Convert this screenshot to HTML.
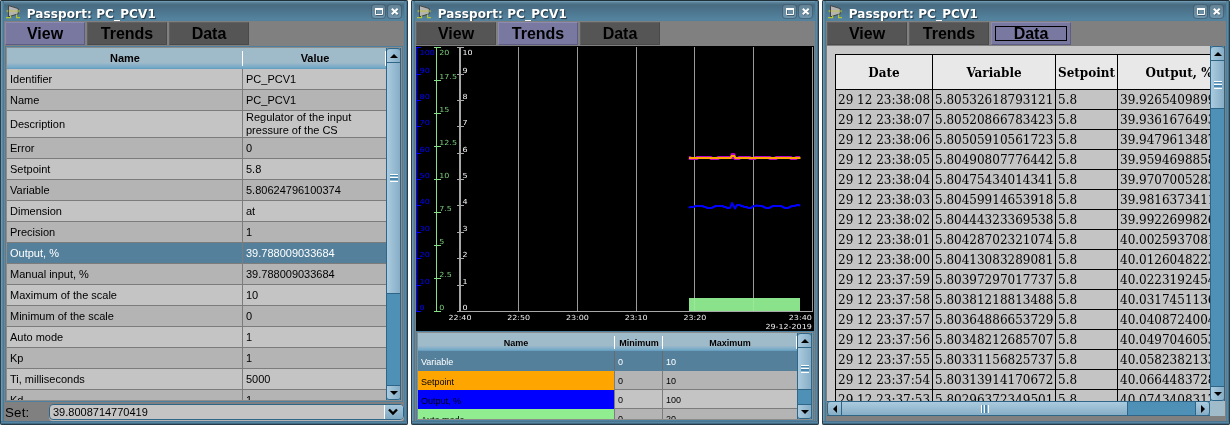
<!DOCTYPE html>
<html><head><meta charset="utf-8"><title>Passport: PC_PCV1</title>
<style>
html,body{margin:0;padding:0;background:#fff;}
body{width:1230px;height:425px;position:relative;overflow:hidden;font-family:"Liberation Sans",sans-serif;font-size:11px;color:#000;}
div{box-sizing:border-box;}
.win{will-change:transform;border-radius:2px;position:absolute;top:0;width:408px;height:425px;background:#808080;overflow:hidden;}
.win .tb{position:absolute;left:0;top:0;width:408px;height:21px;background:linear-gradient(#1f3038 0,#1f3038 1px,#7098b0 1px,#7098b0 2px,#5f879f 2px,#52788f 3.5px,#476b81 5px,#5484a0 20px,#4f7f9b 21px);}
.win .bl{position:absolute;left:0;top:1px;width:4px;height:424px;background:linear-gradient(90deg,#2a3e4a 0,#2a3e4a 1px,#6f98b0 1px,#6f98b0 2px,#5a88a2 2px,#5a88a2 3px,#4d7a93 3px);}
.win .br{position:absolute;left:404px;top:1px;width:4px;height:424px;background:linear-gradient(90deg,#4d829f 0,#4d829f 1px,#5a88a3 1px,#5a88a3 2px,#4a7088 2px,#4a7088 3px,#263c4a 3px);}
.win .bb{position:absolute;left:1px;top:421px;width:406px;height:4px;background:linear-gradient(#4a7590 0,#4a7590 1px,#5585a0 1px,#5585a0 2px,#416a82 2px,#416a82 3px,#283c48 3px);}
.win .ttl{position:absolute;left:26.7px;top:6px;letter-spacing:.12px;font-family:"DejaVu Sans",sans-serif;font-weight:bold;font-size:12px;color:#fff;white-space:nowrap;text-shadow:1px 1px 1px #223644;line-height:16px;}
.win .body{position:absolute;left:4px;top:21px;width:400px;height:400px;background:#808080;overflow:hidden;}
.abs{position:absolute;}
.tab{position:absolute;top:1px;width:80px;height:23px;border:1px solid #4a4a4a;border-top-color:#606060;border-left-color:#606060;background:#555;font-weight:bold;font-size:16px;text-align:center;line-height:21px;}
.tab.on{background:#7878a0;border-color:#8a8ab2 #5c5c84 #5c5c84 #8a8ab2;}
.wb{position:absolute;top:4px;width:15px;height:15px;border-radius:4px;background:rgba(255,255,255,.16);border:1px solid rgba(35,60,80,.5);}
.ico{position:absolute;left:4px;top:3px;width:18px;height:16px;}
.wbi{position:absolute;left:1px;top:1px;}
/* scrollbars */
.sbv{position:absolute;width:15px;border-left:1px solid #2f6586;border-right:1px solid #2f6586;background:#4f90b6;}
.sbb{position:absolute;left:0;width:13px;background:linear-gradient(90deg,#abcbdf,#86aec6);}
.sbu{top:0;height:15px;border-top:1px solid #2f6586;border-bottom:1px solid #2f6586;}
.arr{position:absolute;width:0;height:0;border-left:4px solid transparent;border-right:4px solid transparent;}
.arr.u{border-bottom:4px solid #000;}
.arr.d{border-top:4px solid #000;}
.grip{position:absolute;left:3px;width:8px;height:8px;background:linear-gradient(#fff 0,#fff 1px,#4a88b0 1px,#4a88b0 2.5px,transparent 2.5px,transparent 3.5px,#fff 3.5px,#fff 4.5px,#4a88b0 4.5px,#4a88b0 6px,transparent 6px,transparent 7px,#fff 7px,#fff 8px);}
.setl{position:absolute;left:1px;top:383px;font-size:13.33px;line-height:18px;letter-spacing:.2px;}
.combo{position:absolute;left:45px;top:383px;width:355px;height:16px;border:1px solid #2f6586;border-radius:4px;background:#c4c4c4;box-shadow:0 1px 0 rgba(255,255,255,.42);font-size:11px;line-height:14px;padding-left:3px;overflow:hidden;}
.combo .cb{position:absolute;right:0;top:0;width:19px;height:14px;border-left:1px solid #fff;background:linear-gradient(#a6c6da,#7fa9c2);}
.hsep{position:absolute;top:3px;width:1px;height:15px;background:#fff;}

.r2{position:absolute;left:0;width:379px;border-bottom:1px solid #7c7c7c;font-size:9px;}
.r2 .c{position:absolute;top:0;bottom:0;display:flex;align-items:center;padding-left:3px;padding-top:2px;white-space:nowrap;}
.r2.l{background:#c4c4c4}.r2.d{background:#b4b4b4}.r2.s{background:#54809c;color:#fff;border-bottom-color:#54809c}
.r2.s .c{border-left-color:#6a6a6a !important}
.ta{position:absolute;left:1px;top:25px;width:383px;height:355px;background:#c8c8c8;overflow:hidden;font-family:"DejaVu Serif","Liberation Serif",serif;font-size:12px;}
.dt{position:absolute;left:8px;top:8px;border-collapse:collapse;table-layout:fixed;width:406px;}
.dt th,.dt td{border:1px solid #000;padding:0 2px;white-space:nowrap;overflow:hidden;}
.dt th{background:#e8e8e8;height:32px;padding-top:2px;font-weight:bold;text-align:center;vertical-align:middle;}
.dt td{background:#c4c4c4;height:17px;line-height:17px;padding-top:2px;text-align:left;}
.sbh{position:absolute;height:15px;border-top:1px solid #2f6586;border-bottom:1px solid #2f6586;background:#4f90b6;}
.sbc{position:absolute;top:0;height:13px;background:linear-gradient(#abcbdf,#86aec6);}
.sbl{width:15px;border-left:1px solid #2f6586;border-right:1px solid #2f6586;}
.arh{position:absolute;width:0;height:0;border-top:4px solid transparent;border-bottom:4px solid transparent;}
.arh.l{border-right:4px solid #000;}
.arh.rr{border-left:4px solid #000;}
.griph{position:absolute;top:3px;width:8px;height:8px;background:linear-gradient(90deg,#fff 0,#fff 1px,#4a88b0 1px,#4a88b0 2.5px,transparent 2.5px,transparent 3.5px,#fff 3.5px,#fff 4.5px,#4a88b0 4.5px,#4a88b0 6px,transparent 6px,transparent 7px,#fff 7px,#fff 8px);}
.tab .fr{position:absolute;left:3px;top:3px;width:72px;height:15px;border:1px solid #000;}
/* table 1 */
.t1{position:absolute;left:1px;top:25px;width:398px;height:356px;border:1px solid #4b819e;background:#8c8c8c;overflow:hidden;}
.hd{position:absolute;background:linear-gradient(#9fbac9 0,#9fbac9 70%,#70a7c7 95%,#6097b8 100%);font-weight:bold;text-align:center;font-size:11px;}
.vp{position:absolute;left:1px;top:1px;width:379px;overflow:hidden;}
.r{position:absolute;left:0;width:379px;border-bottom:1px solid #7c7c7c;}
.r .a,.r .b{position:absolute;top:0;bottom:0;display:flex;align-items:center;padding-left:3px;white-space:nowrap;line-height:13px;}
.r .a{left:0;width:236px;border-right:1px solid #7c7c7c;}
.r .b{left:236px;right:0;}
.r.l{background:#c4c4c4}.r.d{background:#b4b4b4}.r.s{background:#54809c;color:#fff}
</style></head><body>
<div class="win" style="left:0px"><div class="tb"></div><div class="bl"></div><div class="br"></div><div class="bb"></div><svg class="ico" viewBox="0 0 18 16" width="18" height="16"><path d="M4.5 2.6 L14.3 5.6 L14.3 10.8 L4.5 13.8 Z" fill="#b4b4b4" stroke="#3a3a3a" stroke-width="0.9"/><path d="M2.6 8.2 H16.4" stroke="#c4c936" stroke-width="2.2" stroke-dasharray="1.6 0.7" opacity=".6"/><path d="M2 14.6 H6.6 V12.6 M16 14.6 H12.6 V11.4" fill="none" stroke="#b2c634" stroke-width="1.2"/></svg>
<div class="ttl">Passport: PC_PCV1</div>
<div class="wb" style="left:371px"><svg class="wbi" width="11" height="11" viewBox="0 0 11 11"><path d="M3 3.5 H10 V9.5 H3.5 Z" fill="none" stroke="#243a48" stroke-width="1" opacity=".55"/><path d="M2.5 2.5 H9.5 V8.5 H2.5 Z" fill="none" stroke="#fff" stroke-width="1"/><path d="M2 3 H10" stroke="#fff" stroke-width="2"/></svg></div><div class="wb" style="left:387px"><svg class="wbi" width="11" height="11" viewBox="0 0 11 11"><path d="M3.4 3.4 L9.2 9 M9.2 3.4 L3.4 9" stroke="#243a48" stroke-width="2" opacity=".5"/><path d="M2.8 2.7 L8.7 8.3 M8.7 2.7 L2.8 8.3" stroke="#fff" stroke-width="2"/></svg></div>
<div class="body"><div class="tab on" style="left:1px">View</div><div class="tab" style="left:83px">Trends</div><div class="tab" style="left:165px">Data</div>
<div class="t1"><div class="vp" style="height:352px"><div class="hd" style="left:0;top:0;width:379px;height:21px;line-height:20px"><span class="abs" style="left:0;width:236px">Name</span><span class="abs" style="left:237px;width:142px">Value</span></div><div class="r l" style="top:21px;height:21px"><div class="a">Identifier</div><div class="b">PC_PCV1</div></div><div class="r d" style="top:42px;height:21px"><div class="a">Name</div><div class="b">PC_PCV1</div></div><div class="r l" style="top:63px;height:27px"><div class="a">Description</div><div class="b">Regulator of the input<br>pressure of the CS</div></div><div class="r d" style="top:90px;height:21px"><div class="a">Error</div><div class="b">0</div></div><div class="r l" style="top:111px;height:21px"><div class="a">Setpoint</div><div class="b">5.8</div></div><div class="r d" style="top:132px;height:21px"><div class="a">Variable</div><div class="b">5.80624796100374</div></div><div class="r l" style="top:153px;height:21px"><div class="a">Dimension</div><div class="b">at</div></div><div class="r d" style="top:174px;height:21px"><div class="a">Precision</div><div class="b">1</div></div><div class="r s" style="top:195px;height:21px"><div class="a">Output, %</div><div class="b">39.788009033684</div></div><div class="r d" style="top:216px;height:21px"><div class="a">Manual input, %</div><div class="b">39.788009033684</div></div><div class="r l" style="top:237px;height:21px"><div class="a">Maximum of the scale</div><div class="b">10</div></div><div class="r d" style="top:258px;height:21px"><div class="a">Minimum of the scale</div><div class="b">0</div></div><div class="r l" style="top:279px;height:21px"><div class="a">Auto mode</div><div class="b">1</div></div><div class="r d" style="top:300px;height:21px"><div class="a">Kp</div><div class="b">1</div></div><div class="r l" style="top:321px;height:21px"><div class="a">Ti, milliseconds</div><div class="b">5000</div></div><div class="r d" style="top:342px;height:21px"><div class="a">Kd</div><div class="b">1</div></div><div class="hsep" style="left:235px"></div><div class="hsep" style="left:378px"></div></div><div class="sbv" style="left:380px;top:1px;height:352px"><div class="sbb sbu" style="border-radius:3px 3px 0 0"><div class="arr u" style="left:3px;top:5px"></div></div><div class="sbb" style="top:15px;height:231px;border-bottom:1px solid #2f6586"><div class="grip" style="top:111px"></div></div><div class="sbb sbu" style="top:337px;border-radius:0 0 3px 3px;border-bottom:1px solid #2f6586"><div class="arr d" style="left:3px;top:5px"></div></div></div></div><div class="setl">Set:</div><div class="combo">39.8008714770419<div class="cb"><svg class="wbi" style="left:2.5px;top:3px" width="10" height="8" viewBox="0 0 10 8"><path d="M1 1.5 L5 5.5 L9 1.5" fill="none" stroke="#000" stroke-width="2.4"/></svg></div></div></div></div>
<div class="win" style="left:411px"><div class="tb"></div><div class="bl"></div><div class="br"></div><div class="bb"></div><svg class="ico" viewBox="0 0 18 16" width="18" height="16"><path d="M4.5 2.6 L14.3 5.6 L14.3 10.8 L4.5 13.8 Z" fill="#b4b4b4" stroke="#3a3a3a" stroke-width="0.9"/><path d="M2.6 8.2 H16.4" stroke="#c4c936" stroke-width="2.2" stroke-dasharray="1.6 0.7" opacity=".6"/><path d="M2 14.6 H6.6 V12.6 M16 14.6 H12.6 V11.4" fill="none" stroke="#b2c634" stroke-width="1.2"/></svg>
<div class="ttl">Passport: PC_PCV1</div>
<div class="wb" style="left:371px"><svg class="wbi" width="11" height="11" viewBox="0 0 11 11"><path d="M3 3.5 H10 V9.5 H3.5 Z" fill="none" stroke="#243a48" stroke-width="1" opacity=".55"/><path d="M2.5 2.5 H9.5 V8.5 H2.5 Z" fill="none" stroke="#fff" stroke-width="1"/><path d="M2 3 H10" stroke="#fff" stroke-width="2"/></svg></div><div class="wb" style="left:387px"><svg class="wbi" width="11" height="11" viewBox="0 0 11 11"><path d="M3.4 3.4 L9.2 9 M9.2 3.4 L3.4 9" stroke="#243a48" stroke-width="2" opacity=".5"/><path d="M2.8 2.7 L8.7 8.3 M8.7 2.7 L2.8 8.3" stroke="#fff" stroke-width="2"/></svg></div>
<div class="body"><div class="tab" style="left:1px">View</div><div class="tab on" style="left:83px">Trends</div><div class="tab" style="left:165px">Data</div>
<svg class="abs" style="left:1px;top:25px" width="398" height="285" viewBox="0 0 398 285" font-family="DejaVu Sans, sans-serif" font-size="7"><rect width="398" height="285" fill="#000"/><rect x="102" y="1" width="1" height="264" fill="#9a9a9a"/><rect x="161" y="1" width="1" height="264" fill="#9a9a9a"/><rect x="220" y="1" width="1" height="264" fill="#9a9a9a"/><rect x="278" y="1" width="1" height="264" fill="#9a9a9a"/><rect x="337" y="1" width="1" height="264" fill="#9a9a9a"/><rect x="396" y="1" width="1" height="264" fill="#9a9a9a"/><rect x="273" y="252" width="111" height="13" fill="#8ae28a"/><rect x="278" y="252" width="1" height="13" fill="#9be89b"/><rect x="337" y="252" width="1" height="13" fill="#9be89b"/><rect x="43" y="265" width="354" height="1" fill="#a8a8a8"/><rect x="0" y="1" width="1.15" height="265" fill="#0000ff"/><rect x="0" y="1" width="5" height="1" fill="#0000ff"/><text transform="translate(3.6 9) scale(1.143 1)" fill="#0000ff">100</text><rect x="0" y="28" width="5" height="1" fill="#0000ff"/><text transform="translate(3.6 27) scale(1.143 1)" fill="#0000ff">90</text><rect x="0" y="54" width="5" height="1" fill="#0000ff"/><text transform="translate(3.6 53) scale(1.143 1)" fill="#0000ff">80</text><rect x="0" y="80" width="5" height="1" fill="#0000ff"/><text transform="translate(3.6 79) scale(1.143 1)" fill="#0000ff">70</text><rect x="0" y="107" width="5" height="1" fill="#0000ff"/><text transform="translate(3.6 106) scale(1.143 1)" fill="#0000ff">60</text><rect x="0" y="133" width="5" height="1" fill="#0000ff"/><text transform="translate(3.6 132) scale(1.143 1)" fill="#0000ff">50</text><rect x="0" y="159" width="5" height="1" fill="#0000ff"/><text transform="translate(3.6 158) scale(1.143 1)" fill="#0000ff">40</text><rect x="0" y="186" width="5" height="1" fill="#0000ff"/><text transform="translate(3.6 185) scale(1.143 1)" fill="#0000ff">30</text><rect x="0" y="212" width="5" height="1" fill="#0000ff"/><text transform="translate(3.6 211) scale(1.143 1)" fill="#0000ff">20</text><rect x="0" y="239" width="5" height="1" fill="#0000ff"/><text transform="translate(3.6 238) scale(1.143 1)" fill="#0000ff">10</text><rect x="0" y="265" width="5" height="1" fill="#0000ff"/><text transform="translate(3.6 264) scale(1.143 1)" fill="#0000ff">0</text><rect x="20" y="1" width="1" height="265" fill="#86df86"/><rect x="18" y="1" width="7" height="1" fill="#86df86"/><text transform="translate(23.2 9) scale(1.143 1)" fill="#7acb7a">20</text><rect x="18" y="34" width="7" height="1" fill="#86df86"/><text transform="translate(23.2 33) scale(1.143 1)" fill="#7acb7a">17.5</text><rect x="18" y="67" width="7" height="1" fill="#86df86"/><text transform="translate(23.2 66) scale(1.143 1)" fill="#7acb7a">15</text><rect x="18" y="100" width="7" height="1" fill="#86df86"/><text transform="translate(23.2 99) scale(1.143 1)" fill="#7acb7a">12.5</text><rect x="18" y="133" width="7" height="1" fill="#86df86"/><text transform="translate(23.2 132) scale(1.143 1)" fill="#7acb7a">10</text><rect x="18" y="166" width="7" height="1" fill="#86df86"/><text transform="translate(23.2 165) scale(1.143 1)" fill="#7acb7a">7.5</text><rect x="18" y="199" width="7" height="1" fill="#86df86"/><text transform="translate(23.2 198) scale(1.143 1)" fill="#7acb7a">5</text><rect x="18" y="232" width="7" height="1" fill="#86df86"/><text transform="translate(23.2 231) scale(1.143 1)" fill="#7acb7a">2.5</text><rect x="18" y="265" width="7" height="1" fill="#86df86"/><text transform="translate(23.2 264) scale(1.143 1)" fill="#7acb7a">0</text><rect x="43" y="1" width="2" height="265" fill="#a8a8a8"/><rect x="41" y="1" width="7" height="1" fill="#a8a8a8"/><text transform="translate(46.4 9) scale(1.143 1)" fill="#f4f4f4">10</text><rect x="41" y="28" width="7" height="1" fill="#a8a8a8"/><text transform="translate(46.4 27) scale(1.143 1)" fill="#f4f4f4">9</text><rect x="41" y="54" width="7" height="1" fill="#a8a8a8"/><text transform="translate(46.4 53) scale(1.143 1)" fill="#f4f4f4">8</text><rect x="41" y="80" width="7" height="1" fill="#a8a8a8"/><text transform="translate(46.4 79) scale(1.143 1)" fill="#f4f4f4">7</text><rect x="41" y="107" width="7" height="1" fill="#a8a8a8"/><text transform="translate(46.4 106) scale(1.143 1)" fill="#f4f4f4">6</text><rect x="41" y="133" width="7" height="1" fill="#a8a8a8"/><text transform="translate(46.4 132) scale(1.143 1)" fill="#f4f4f4">5</text><rect x="41" y="159" width="7" height="1" fill="#a8a8a8"/><text transform="translate(46.4 158) scale(1.143 1)" fill="#f4f4f4">4</text><rect x="41" y="186" width="7" height="1" fill="#a8a8a8"/><text transform="translate(46.4 185) scale(1.143 1)" fill="#f4f4f4">3</text><rect x="41" y="212" width="7" height="1" fill="#a8a8a8"/><text transform="translate(46.4 211) scale(1.143 1)" fill="#f4f4f4">2</text><rect x="41" y="239" width="7" height="1" fill="#a8a8a8"/><text transform="translate(46.4 238) scale(1.143 1)" fill="#f4f4f4">1</text><rect x="41" y="265" width="7" height="1" fill="#a8a8a8"/><text transform="translate(46.4 264) scale(1.143 1)" fill="#f4f4f4">0</text><text transform="translate(44.0 274) scale(1.143 1)" fill="#ececec" text-anchor="middle">22:40</text><text transform="translate(102.7 274) scale(1.143 1)" fill="#ececec" text-anchor="middle">22:50</text><text transform="translate(161.4 274) scale(1.143 1)" fill="#ececec" text-anchor="middle">23:00</text><text transform="translate(220.2 274) scale(1.143 1)" fill="#ececec" text-anchor="middle">23:10</text><text transform="translate(278.9 274) scale(1.143 1)" fill="#ececec" text-anchor="middle">23:20</text><text transform="translate(395.8 274) scale(1.143 1)" fill="#ececec" text-anchor="end">23:40</text><text transform="translate(395.8 283) scale(1.143 1)" fill="#ececec" text-anchor="end">29-12-2019</text><polyline points="273,111.5 274,111.5 274,112.5 275,112.5 276,112.5 277,112.5 278,112.5 279,112.5 280,112.5 281,112.5 281,111.5 282,111.5 283,111.5 284,111.5 285,111.5 286,111.5 287,111.5 288,111.5 289,111.5 290,111.5 291,111.5 292,111.5 293,111.5 294,111.5 295,111.5 295,112.5 296,112.5 297,112.5 298,112.5 299,112.5 300,112.5 301,112.5 302,112.5 302,111.5 303,111.5 304,111.5 305,111.5 306,111.5 307,111.5 308,111.5 309,111.5 310,111.5 311,111.5 312,111.5 313,111.5 314,111.5 315,111.5 316,111.5 316,108.5 317,108.5 318,108.5 318,111.5 319,111.5 319,112.5 320,112.5 321,112.5 322,112.5 323,112.5 323,111.5 324,111.5 325,111.5 326,111.5 327,111.5 328,111.5 329,111.5 330,111.5 331,111.5 332,111.5 333,111.5 334,111.5 334,112.5 335,112.5 336,112.5 337,112.5 338,112.5 339,112.5 339,111.5 340,111.5 341,111.5 342,111.5 343,111.5 344,111.5 345,111.5 346,111.5 347,111.5 348,111.5 349,111.5 350,111.5 351,111.5 352,111.5 353,111.5 354,111.5 354,112.5 355,112.5 356,112.5 357,112.5 358,112.5 359,112.5 360,112.5 360,111.5 361,111.5 362,111.5 363,111.5 364,111.5 365,111.5 366,111.5 367,111.5 368,111.5 369,111.5 370,111.5 371,111.5 372,111.5 373,111.5 374,111.5 375,111.5 375,112.5 376,112.5 377,112.5 378,112.5 379,112.5 380,112.5 380,111.5 381,111.5 382,111.5 383,111.5 384,111.5" fill="none" stroke="#b800c4" stroke-width="3" stroke-linejoin="round"/><polyline points="273,112 314.6,112 315.6,110 318.4,110 319.4,112 384.5,112" fill="none" stroke="#ffa500" stroke-width="2"/><polyline points="273,162 274,161 278,161 279,160 287,160 288,161 290,161 291,162 296,162 297,161 298,161 299,160 307,160 308,161 310,161 311,162 314,162 316,157 319,162.5 321,159 324,159 325,160 327,160 328,161 331,161 332,162 335,162 336,161 338,160 341,159.5 344,160 346,160 348,161 350,162 353,162 355,161 357,160 365,160 367,161 369,162 372,162 374,161 376,160 379,160 381,159 383,159 384,160" fill="none" stroke="#0000ff" stroke-width="2" stroke-linejoin="round"/></svg><div class="t1" style="top:310px;height:90px"><div class="vp" style="height:86px"><div class="hd" style="left:0;top:0;width:379px;height:18px;line-height:20px;font-size:9px"><span class="abs" style="left:0;width:196px">Name</span><span class="abs" style="left:197px;width:48px">Minimum</span><span class="abs" style="left:245px;width:134px">Maximum</span></div><div class="hsep" style="left:196px;top:3px;height:13px"></div><div class="hsep" style="left:244px;top:3px;height:13px"></div><div class="hsep" style="left:378px;top:3px;height:13px"></div><div class="r2 s" style="top:18px;height:20px"><div class="c" style="left:0;width:196px;background:#54809c;bottom:-1px">Variable</div><div class="c" style="left:196px;width:48px;border-left:1px solid #7c7c7c">0</div><div class="c" style="left:244px;width:135px;border-left:1px solid #7c7c7c">10</div></div><div class="r2 d" style="top:38px;height:19px"><div class="c" style="left:0;width:196px;background:#ffa500;bottom:-1px">Setpoint</div><div class="c" style="left:196px;width:48px;border-left:1px solid #7c7c7c">0</div><div class="c" style="left:244px;width:135px;border-left:1px solid #7c7c7c">10</div></div><div class="r2 l" style="top:57px;height:19px"><div class="c" style="left:0;width:196px;background:#0000ff;bottom:-1px">Output, %</div><div class="c" style="left:196px;width:48px;border-left:1px solid #7c7c7c">0</div><div class="c" style="left:244px;width:135px;border-left:1px solid #7c7c7c">100</div></div><div class="r2 d" style="top:76px;height:19px"><div class="c" style="left:0;width:196px;background:#90ee90;bottom:-1px">Auto mode</div><div class="c" style="left:196px;width:48px;border-left:1px solid #7c7c7c">0</div><div class="c" style="left:244px;width:135px;border-left:1px solid #7c7c7c">20</div></div></div><div class="sbv" style="left:380px;top:1px;height:86px"><div class="sbb sbu" style="border-radius:3px 3px 0 0"><div class="arr u" style="left:3px;top:5px"></div></div><div class="sbb" style="top:15px;height:42px;border-bottom:1px solid #2f6586"><div class="grip" style="top:17px"></div></div><div class="sbb sbu" style="top:71px;border-radius:0 0 3px 3px;border-bottom:1px solid #2f6586"><div class="arr d" style="left:3px;top:5px"></div></div></div></div></div></div>
<div class="win" style="left:822px"><div class="tb"></div><div class="bl"></div><div class="br"></div><div class="bb"></div><svg class="ico" viewBox="0 0 18 16" width="18" height="16"><path d="M4.5 2.6 L14.3 5.6 L14.3 10.8 L4.5 13.8 Z" fill="#b4b4b4" stroke="#3a3a3a" stroke-width="0.9"/><path d="M2.6 8.2 H16.4" stroke="#c4c936" stroke-width="2.2" stroke-dasharray="1.6 0.7" opacity=".6"/><path d="M2 14.6 H6.6 V12.6 M16 14.6 H12.6 V11.4" fill="none" stroke="#b2c634" stroke-width="1.2"/></svg>
<div class="ttl">Passport: PC_PCV1</div>
<div class="wb" style="left:371px"><svg class="wbi" width="11" height="11" viewBox="0 0 11 11"><path d="M3 3.5 H10 V9.5 H3.5 Z" fill="none" stroke="#243a48" stroke-width="1" opacity=".55"/><path d="M2.5 2.5 H9.5 V8.5 H2.5 Z" fill="none" stroke="#fff" stroke-width="1"/><path d="M2 3 H10" stroke="#fff" stroke-width="2"/></svg></div><div class="wb" style="left:387px"><svg class="wbi" width="11" height="11" viewBox="0 0 11 11"><path d="M3.4 3.4 L9.2 9 M9.2 3.4 L3.4 9" stroke="#243a48" stroke-width="2" opacity=".5"/><path d="M2.8 2.7 L8.7 8.3 M8.7 2.7 L2.8 8.3" stroke="#fff" stroke-width="2"/></svg></div>
<div class="body"><div class="tab" style="left:1px">View</div><div class="tab" style="left:83px">Trends</div><div class="tab on" style="left:165px">Data<div class="fr"></div></div>
<div class="ta"><table class="dt"><tr><th style="width:92px">Date</th><th style="width:118px">Variable</th><th style="width:57px">Setpoint</th><th style="width:118px">Output, %</th></tr><tr><td>29 12 23:38:08</td><td>5.80532618793121</td><td>5.8</td><td>39.9265409899712</td></tr><tr><td>29 12 23:38:07</td><td>5.80520866783423</td><td>5.8</td><td>39.9361676493511</td></tr><tr><td>29 12 23:38:06</td><td>5.80505910561723</td><td>5.8</td><td>39.9479613487204</td></tr><tr><td>29 12 23:38:05</td><td>5.80490807776442</td><td>5.8</td><td>39.9594698858331</td></tr><tr><td>29 12 23:38:04</td><td>5.80475434014341</td><td>5.8</td><td>39.9707005283462</td></tr><tr><td>29 12 23:38:03</td><td>5.80459914653918</td><td>5.8</td><td>39.9816373411871</td></tr><tr><td>29 12 23:38:02</td><td>5.80444323369538</td><td>5.8</td><td>39.9922699826105</td></tr><tr><td>29 12 23:38:01</td><td>5.80428702321074</td><td>5.8</td><td>40.0025937081333</td></tr><tr><td>29 12 23:38:00</td><td>5.80413083289081</td><td>5.8</td><td>40.0126048223718</td></tr><tr><td>29 12 23:37:59</td><td>5.80397297017737</td><td>5.8</td><td>40.0223192454196</td></tr><tr><td>29 12 23:37:58</td><td>5.80381218813488</td><td>5.8</td><td>40.0317451136029</td></tr><tr><td>29 12 23:37:57</td><td>5.80364886653729</td><td>5.8</td><td>40.0408724004215</td></tr><tr><td>29 12 23:37:56</td><td>5.80348212685707</td><td>5.8</td><td>40.0497046053127</td></tr><tr><td>29 12 23:37:55</td><td>5.80331156825737</td><td>5.8</td><td>40.0582382133346</td></tr><tr><td>29 12 23:37:54</td><td>5.80313914170672</td><td>5.8</td><td>40.0664483728502</td></tr><tr><td>29 12 23:37:53</td><td>5.80296372349501</td><td>5.8</td><td>40.0743408317117</td></tr></table></div><div class="sbv" style="left:384px;top:25px;height:355px"><div class="sbb sbu" style="border-radius:3px 3px 0 0"><div class="arr u" style="left:3px;top:5px"></div></div><div class="sbb" style="top:15px;height:48px;border-bottom:1px solid #2f6586"><div class="grip" style="top:20px"></div></div><div class="sbb sbu" style="top:340px;border-radius:0 0 3px 3px;border-bottom:1px solid #2f6586"><div class="arr d" style="left:3px;top:5px"></div></div></div><div class="sbh" style="left:1px;top:380px;width:383px"><div class="sbc sbl" style="left:0;border-radius:3px 0 0 3px"><div class="arh l" style="left:5px;top:3px"></div></div><div class="sbc" style="left:15px;width:286px;border-right:1px solid #2f6586"><div class="griph" style="left:139px"></div></div><div class="sbc sbl" style="left:368px;border-radius:0 3px 3px 0;border-right:1px solid #2f6586"><div class="arh rr" style="left:5px;top:3px"></div></div></div><div class="abs" style="left:384px;top:380px;width:15px;height:15px;background:#a0bccb"></div></div></div>

</body></html>
